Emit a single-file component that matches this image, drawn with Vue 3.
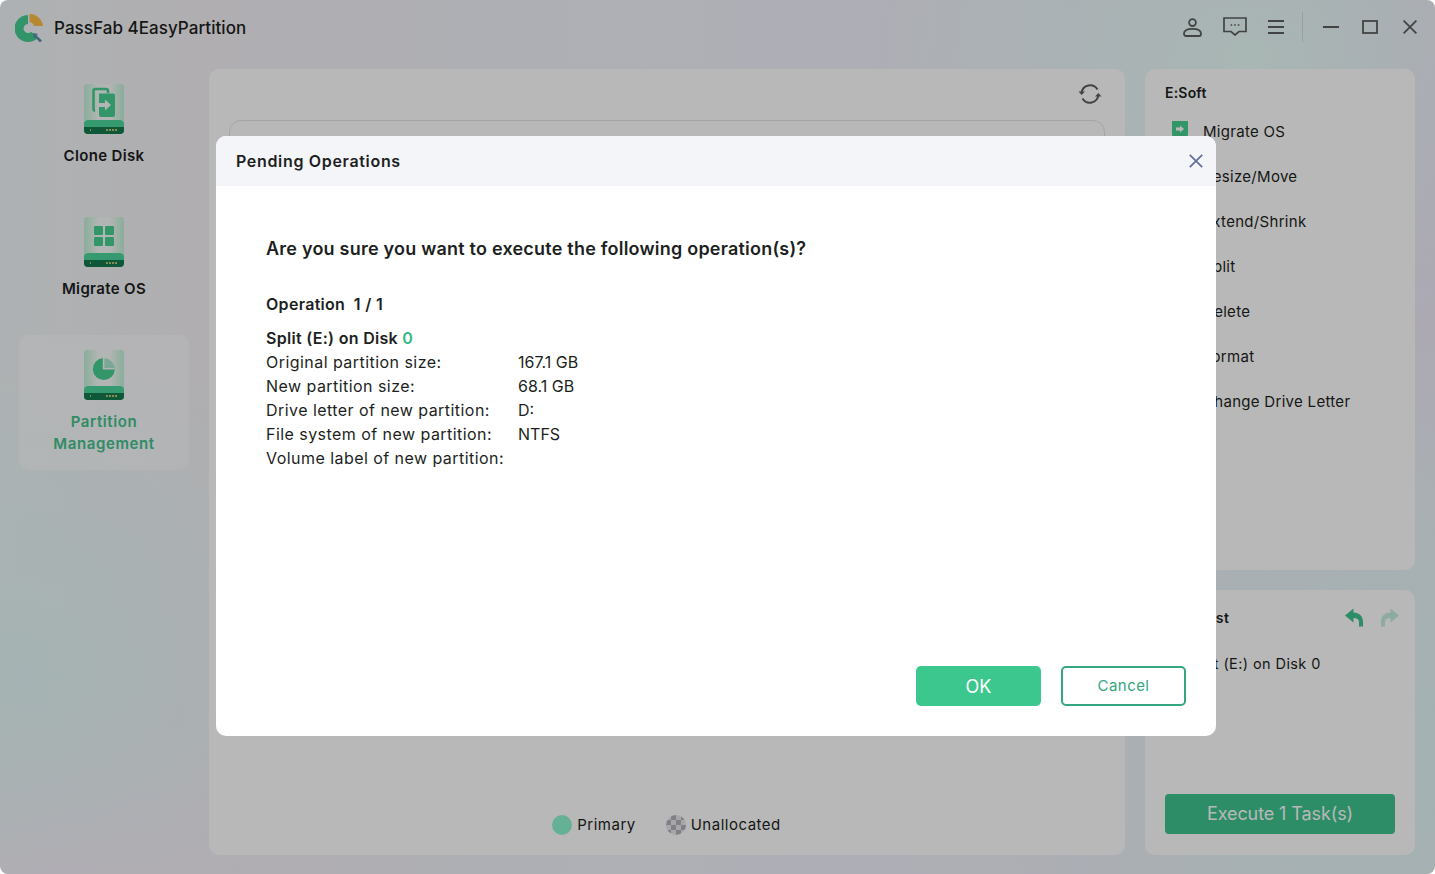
<script setup>
const navItems = [
  { label: 'Clone Disk', kind: 'clone' },
  { label: 'Migrate OS', kind: 'grid' },
  { label: 'Partition Management', kind: 'pie', active: true },
]
const actions = ['Migrate OS', 'Resize/Move', 'Extend/Shrink', 'Split', 'Delete', 'Format', 'Change Drive Letter']
const details = [
  ['Original partition size:', '167.1 GB'],
  ['New partition size:', '68.1 GB'],
  ['Drive letter of new partition:', 'D:'],
  ['File system of new partition:', 'NTFS'],
  ['Volume label of new partition:', ''],
]
</script>

<template>
  <div class="window">
    <header class="titlebar">
      <svg class="logo" viewBox="15 12 30 30" width="30" height="30">
        <path d="M28 18.5 A9 9 0 1 0 34.5 33.8" fill="none" stroke="#45cf92" stroke-width="9" />
        <path d="M29.5 13 A13.5 13.5 0 0 1 43 25 L33.8 25 A4.5 4.500 0 0 0 29.5 21.2 Z" fill="#ffbb45" />
        <path d="M33 32 L38 33 L36.6 34.6 L42 39.6 L40 41.4 L35 36.2 L33.6 37.6 Z" fill="#5a92ae" />
      </svg>
      <span class="app-name">PassFab 4EasyPartition</span>
      <div class="win-tools">
        <svg class="t-user" width="19" height="19" viewBox="0 0 19 19" fill="none" stroke="#5e5e5e" stroke-width="1.8">
          <circle cx="9.5" cy="4.6" r="3.4" />
          <path d="M1 15.500 C1 12.500 4.500 10.800 9.500 10.800 S18 12.500 18 15.500 V16 A2 2 0 0 1 16 18 H3 A2 2 0 0 1 1 16 Z" />
        </svg>
        <svg class="t-chat" width="24" height="19" viewBox="0 0 24 19" fill="none" stroke="#5e5e5e" stroke-width="1.7">
          <path d="M1 1 H23 V14.500 H16 L12 18 L8 14.500 H1 Z" />
          <path d="M7.600 8 h1.600 M11.200 8 h1.600 M14.800 8 h1.600" stroke-width="1.600" />
        </svg>
        <svg class="t-menu" width="16" height="14" viewBox="0 0 16 14" stroke="#5e5e5e" stroke-width="1.8">
          <path d="M0 1 H16 M0 7 H16 M0 13 H16" />
        </svg>
        <i class="t-sep"></i>
        <svg class="t-min" width="16" height="2" viewBox="0 0 16 2" stroke="#5e5e5e" stroke-width="1.8"><path d="M0 1 H16" /></svg>
        <svg class="t-max" width="16" height="14" viewBox="0 0 16 14" fill="none" stroke="#5e5e5e" stroke-width="1.8"><rect x="1" y="1" width="14" height="12" /></svg>
        <svg class="t-close" width="14" height="14" viewBox="0 0 14 14" stroke="#5e5e5e" stroke-width="1.8"><path d="M0.6 0.6 L13.4 13.4 M13.4 0.6 L0.6 13.4" /></svg>
      </div>
    </header>

    <div class="main">
      <nav class="sidebar">
        <div v-for="item in navItems" :key="item.kind" class="nav-item" :class="{ active: item.active }">
          <svg class="drive" viewBox="0 0 40 50" width="40" height="50">
            <defs>
              <linearGradient :id="'b' + item.kind" x1="0" x2="1" y1="0" y2="0">
                <stop offset="0" stop-color="#bff0d8" />
                <stop offset="0.35" stop-color="#f6fbf8" />
                <stop offset="0.65" stop-color="#f6fbf8" />
                <stop offset="1" stop-color="#bff0d8" />
              </linearGradient>
            </defs>
            <path d="M3 0 H37 A3 3 0 0 1 40 3 V42 H0 V3 A3 3 0 0 1 3 0 Z" :fill="'url(#b' + item.kind + ')'" />
            <path d="M0 40 C0 37 2 36 5 36 H35 C38 36 40 37 40 40 V46 A4 4 0 0 1 36 50 H4 A4 4 0 0 1 0 46 Z" fill="#4cd69b" />
            <path d="M0 43 H40 V46 A4 4 0 0 1 36 50 H4 A4 4 0 0 1 0 46 Z" fill="#14794f" />
            <path d="M6 46 h1 M22 46 h12" stroke="#f2dc80" stroke-width="1.6" stroke-dasharray="2 1" />
            <g v-if="item.kind === 'clone'" fill="#46d092">
              <path d="M11 27 A2 2 0 0 1 9.500 25 V7 A2 2 0 0 1 11.500 5 H22 A2 2 0 0 1 24 7 V9" fill="none" stroke="#46d092" stroke-width="2.600" />
              <path d="M15 9.500 H29 A2 2 0 0 1 31 11.500 V31 A2 2 0 0 1 29 33 H17 A2 2 0 0 1 15 31 Z" />
              <path d="M14 19 H21 V15.500 L27 21 L21 26.500 V23 H14 Z" fill="#f6fbf8" />
            </g>
            <g v-else-if="item.kind === 'grid'" fill="#46d092">
              <rect x="10" y="9" width="9" height="9" rx="1" />
              <rect x="21" y="9" width="9" height="9" rx="1" />
              <rect x="10" y="20" width="9" height="9" rx="1" />
              <rect x="21" y="20" width="9" height="9" rx="1" />
            </g>
            <g v-else>
              <path d="M18.800 8 A11 11 0 1 0 30.800 19.500 H18.800 Z" fill="#46d092" />
              <path d="M20.300 8.200 A11 11 0 0 1 30.800 18 H20.300 Z" fill="#aee8cf" />
            </g>
          </svg>
          <span class="nav-label">{{ item.label }}</span>
        </div>
      </nav>

      <section class="center panel">
        <div class="center-top">
          <svg width="24" height="22" viewBox="0 0 24 22" fill="none" stroke="#5e5e5e" stroke-width="2">
            <path d="M3.600 10 A8.600 8.600 0 0 1 19.500 6.500" />
            <path d="M20.400 12 A8.600 8.600 0 0 1 4.500 15.500" />
            <path d="M0.500 8.500 L3.600 12 L7 8.500 Z M17 13.500 L20.400 10 L23.500 13.500 Z" fill="#5e5e5e" stroke="none" />
          </svg>
        </div>
        <div class="disk-box"></div>
        <div class="legend">
          <i class="dot primary"></i><span>Primary</span>
          <i class="dot unalloc"></i><span>Unallocated</span>
        </div>
      </section>

      <aside class="side">
        <section class="panel ops">
          <h3>E:Soft</h3>
          <ul>
            <li v-for="(a, i) in actions" :key="a">
              <svg class="op-icon" width="18" height="17" viewBox="0 0 18 17">
                <path d="M1 0 H17 V14 L16 16 H2 L1 14 Z" :fill="i === 0 ? '#46d092' : '#86d8b6'" />
                <path d="M5 6.500 H9 V4.500 L13 8 L9 11.500 V9.500 H5 Z" fill="#fff" />
              </svg>
              <span>{{ a }}</span>
            </li>
          </ul>
        </section>
        <section class="panel tasks">
          <div class="task-head">
            <h3>Task List</h3>
            <svg width="20" height="20" viewBox="0 0 20 20"><path d="M1 7.500 L9.500 0.500 V4.500 C15 4.500 19 8 19 14 V18.500 H15 V14 C15 11.500 13 10 9.500 10 V14.500 Z" fill="#3dc48e" /></svg>
            <svg class="redo" width="20" height="20" viewBox="0 0 20 20"><path d="M19 7.500 L10.500 0.500 V4.500 C5 4.500 1 8 1 14 V18.500 H5 V14 C5 11.500 7 10 10.500 10 V14.500 Z" fill="#3dc48e" opacity=".3" /></svg>
          </div>
          <p class="task-line">Split (E:) on Disk 0</p>
          <button class="execute">Execute 1 Task(s)</button>
        </section>
      </aside>
    </div>

    <div class="overlay">
      <div class="modal">
        <div class="modal-head">
          <span>Pending Operations</span>
          <svg width="14" height="14" viewBox="0 0 14 14" stroke="#63719a" stroke-width="1.8"><path d="M0.800 0.800 L13.200 13.200 M13.200 0.800 L0.800 13.200" /></svg>
        </div>
        <div class="modal-body">
          <h2>Are you sure you want to execute the following operation(s)?</h2>
          <h4 class="op-count">Operation&nbsp; 1 / 1</h4>
          <h4 class="op-name">Split (E:) on Disk <b>0</b></h4>
          <div v-for="d in details" :key="d[0]" class="row">
            <span class="key">{{ d[0] }}</span><span>{{ d[1] }}</span>
          </div>
          <div class="modal-actions">
            <button class="ok">OK</button>
            <button class="cancel">Cancel</button>
          </div>
        </div>
      </div>
    </div>
  </div>
</template>

<style>
html, body { background: #fff; }
</style>

<style scoped>
.window {
  position: relative;
  width: 1435px;
  height: 874px;
  overflow: hidden;
  border-radius: 8px;
  display: flex;
  flex-direction: column;
  font-family: Inter, "Liberation Sans", sans-serif;
  color: #1d1f22;
  background:
    radial-gradient(380px 300px at 1250px 60px, rgba(232, 255, 250, .9), rgba(232, 255, 250, 0)),
    radial-gradient(420px 380px at 1430px 110px, rgba(240, 226, 250, .9), rgba(240, 226, 250, 0)),
    radial-gradient(360px 360px at 20px 680px, rgba(226, 250, 250, .75), rgba(226, 250, 250, 0)),
    radial-gradient(300px 200px at 60px 880px, rgba(255, 235, 250, .9), rgba(255, 235, 250, 0)),
    radial-gradient(400px 400px at 1400px 760px, rgba(225, 248, 248, .9), rgba(225, 248, 248, 0)),
    linear-gradient(90deg, #f2f6f8 0%, #f4f2f6 14%, #f1f4fd 45%, #f1f2fb 70%, #eef0f8 100%);
}
.titlebar {
  height: 69px;
  flex: none;
  display: flex;
  align-items: center;
  padding: 0 18px 16px 15px;
  box-sizing: border-box;
}
.logo { flex: none; margin-top: 2px; }
.app-name {
  margin: 2px 0 0 9px;
  font-size: 17px;
  font-weight: 500;
  letter-spacing: .05px;
}
.win-tools {
  margin-left: auto;
  display: flex;
  align-items: center;
}
.t-user { margin-top: 1px; }
.t-chat { margin: 0 0 1px 21px; }
.t-menu { margin-left: 21px; }
.t-sep { width: 1px; height: 30px; margin-left: 18px; background: rgba(0, 0, 0, .1); }
.t-min { margin-left: 20px; }
.t-max { margin-left: 23px; }
.t-close { margin-left: 25px; }

.main { flex: 1; display: flex; min-height: 0; padding-bottom: 19px; }
.sidebar {
  width: 209px;
  flex: none;
  box-sizing: border-box;
  padding-left: 19px;
  display: flex;
  flex-direction: column;
  gap: 20px;
}
.nav-item {
  width: 170px;
  box-sizing: border-box;
  padding: 15px 20px 15px;
  border-radius: 10px;
  display: flex;
  flex-direction: column;
  align-items: center;
  text-align: center;
}
.nav-item.active { background: rgba(255, 255, 255, .5); color: #42c28c; }
.nav-item.active .nav-label { letter-spacing: .6px; }
.drive { display: block; margin-bottom: 11px; }
.nav-label { font-size: 15px; line-height: 22px; font-weight: 600; letter-spacing: .35px; }

.panel { background: #fff; border-radius: 10px; box-sizing: border-box; }
.center {
  width: 916px;
  flex: none;
  padding: 0 20px 20px;
  display: flex;
  flex-direction: column;
}
.center-top { height: 51px; display: flex; justify-content: flex-end; align-items: flex-end; padding-bottom: 15px; box-sizing: border-box; margin-right: 3px; }
.disk-box { height: 120px; border: 1px solid #e4e4e4; border-radius: 12px; }
.legend {
  margin-top: auto;
  display: flex;
  align-items: center;
  justify-content: center;
  font-size: 15px;
  line-height: 20px;
  letter-spacing: .5px;
  padding-right: 1px;
}
.dot { width: 20px; height: 20px; border-radius: 50%; margin-right: 5px; }
.primary { background: #8df5cf; }
.unalloc {
  margin-left: 30px;
  background: repeating-conic-gradient(#b2b2b9 0 25%, #e8e8ee 0 50%) 0 0 / 10px 10px;
}

.side { width: 270px; margin-left: 20px; display: flex; flex-direction: column; gap: 20px; }
.ops { height: 501px; padding: 14px 20px; }
h3 { margin: 0; font-size: 14px; font-weight: 600; line-height: 20px; letter-spacing: .2px; }
.ops ul { list-style: none; margin: 6px 0 0; padding: 0 0 0 6px; }
.ops li { height: 45px; display: flex; align-items: center; font-size: 15px; letter-spacing: .3px; }
.op-icon { margin: -5px 14px 0 0; flex: none; }
.tasks { flex: 1; padding: 0 20px 21px; display: flex; flex-direction: column; }
.task-head { height: 54px; display: flex; align-items: center; padding-top: 1px; box-sizing: border-box; }
.task-head h3 { flex: 1; letter-spacing: .55px; }
.redo { margin: 0 -5px 0 16px; }
.task-line { margin: 9px 0 0 22px; font-size: 14.5px; line-height: 22px; letter-spacing: .4px; }
.execute {
  margin-top: auto;
  height: 40px;
  border: 0;
  border-radius: 4px;
  background: #3dc48e;
  color: #fff;
  font: 400 18px Inter, sans-serif;
  letter-spacing: -.1px;
  padding-bottom: 2px;
}

.overlay {
  position: absolute;
  inset: 0;
  background: rgba(0, 0, 0, .28);
  padding: 136px 0 0 216px;
  box-sizing: border-box;
}
.modal {
  width: 1000px;
  height: 600px;
  background: #fff;
  border-radius: 10px;
  overflow: hidden;
  display: flex;
  flex-direction: column;
}
.modal-head {
  height: 50px;
  flex: none;
  background: #f4f5f9;
  display: flex;
  align-items: center;
  justify-content: space-between;
  padding: 0 13px 0 20px;
  font-size: 16px;
  font-weight: 600;
  letter-spacing: .67px;
}
.modal-body { flex: 1; padding: 50px 30px 30px 50px; display: flex; flex-direction: column; }
h2 { margin: 0; font-size: 18px; line-height: 26px; font-weight: 600; letter-spacing: .22px; }
h4 { margin: 0; font-size: 16px; line-height: 24px; font-weight: 600; letter-spacing: .3px; }
.op-count { margin-top: 30px; }
.op-name { margin-top: 10px; }
.op-name b { color: #34b985; font-weight: 600; }
.row {
  display: grid;
  grid-template-columns: 252px 1fr;
  font-size: 16px;
  line-height: 24px;
  letter-spacing: 0;
}
.key { letter-spacing: .45px; white-space: nowrap; }
.modal-actions { margin-top: auto; display: flex; justify-content: flex-end; gap: 20px; }
.modal-actions button {
  width: 125px;
  height: 40px;
  border-radius: 5px;
  font-family: Inter, sans-serif;
  box-sizing: border-box;
}
.ok { background: #3bc78e; border: 0; color: #fff; font-size: 18px; }
.cancel { background: #fff; border: 2px solid #35a67e; color: #35a67e; font-size: 15px; letter-spacing: .45px; padding-bottom: 3px; }
</style>
